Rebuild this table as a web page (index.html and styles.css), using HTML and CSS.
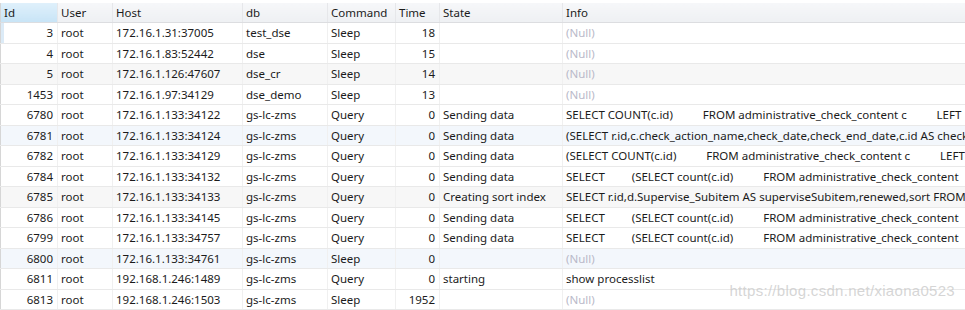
FILE: index.html
```html
<!DOCTYPE html>
<html lang="zh-cn">
<head>
    <meta charset="UTF-8">
    <title>processlist</title>
    <link rel="stylesheet" href="styles.css">
</head>
<body>
    <div class="grid-wrap">
        <table class="grid">
            <colgroup>
                <col class="c-id"><col class="c-user"><col class="c-host"><col class="c-db">
                <col class="c-cmd"><col class="c-time"><col class="c-state"><col class="c-info">
            </colgroup>
            <thead>
                <tr>
                    <th class="sorted">Id</th><th>User</th><th>Host</th><th>db</th>
                    <th>Command</th><th>Time</th><th>State</th><th>Info</th>
                </tr>
            </thead>
            <tbody>
                <tr class="first"><td class="num">3</td><td>root</td><td>172.16.1.31:37005</td><td>test_dse</td><td>Sleep</td><td class="num">18</td><td></td><td class="null">(Null)</td></tr>
                <tr><td class="num">4</td><td>root</td><td>172.16.1.83:52442</td><td>dse</td><td>Sleep</td><td class="num">15</td><td></td><td class="null">(Null)</td></tr>
                <tr class="alt"><td class="num">5</td><td>root</td><td>172.16.1.126:47607</td><td>dse_cr</td><td>Sleep</td><td class="num">14</td><td></td><td class="null">(Null)</td></tr>
                <tr><td class="num">1453</td><td>root</td><td>172.16.1.97:34129</td><td>dse_demo</td><td>Sleep</td><td class="num">13</td><td></td><td class="null">(Null)</td></tr>
                <tr><td class="num">6780</td><td>root</td><td>172.16.1.133:34122</td><td>gs-lc-zms</td><td>Query</td><td class="num">0</td><td>Sending data</td><td class="sql">SELECT COUNT(c.id)          FROM administrative_check_content c          LEFT</td></tr>
                <tr class="hl"><td class="num">6781</td><td>root</td><td>172.16.1.133:34124</td><td>gs-lc-zms</td><td>Query</td><td class="num">0</td><td>Sending data</td><td class="sql">(SELECT r.id,c.check_action_name,check_date,check_end_date,c.id AS check</td></tr>
                <tr><td class="num">6782</td><td>root</td><td>172.16.1.133:34129</td><td>gs-lc-zms</td><td>Query</td><td class="num">0</td><td>Sending data</td><td class="sql">(SELECT COUNT(c.id)          FROM administrative_check_content c          LEFT</td></tr>
                <tr><td class="num">6784</td><td>root</td><td>172.16.1.133:34132</td><td>gs-lc-zms</td><td>Query</td><td class="num">0</td><td>Sending data</td><td class="sql">SELECT         (SELECT count(c.id)          FROM administrative_check_content</td></tr>
                <tr class="alt"><td class="num">6785</td><td>root</td><td>172.16.1.133:34133</td><td>gs-lc-zms</td><td>Query</td><td class="num">0</td><td>Creating sort index</td><td class="sql">SELECT r.id,d.Supervise_Subitem AS superviseSubitem,renewed,sort FROM</td></tr>
                <tr><td class="num">6786</td><td>root</td><td>172.16.1.133:34145</td><td>gs-lc-zms</td><td>Query</td><td class="num">0</td><td>Sending data</td><td class="sql">SELECT         (SELECT count(c.id)          FROM administrative_check_content</td></tr>
                <tr><td class="num">6799</td><td>root</td><td>172.16.1.133:34757</td><td>gs-lc-zms</td><td>Query</td><td class="num">0</td><td>Sending data</td><td class="sql">SELECT         (SELECT count(c.id)          FROM administrative_check_content</td></tr>
                <tr class="hl"><td class="num">6800</td><td>root</td><td>172.16.1.133:34761</td><td>gs-lc-zms</td><td>Sleep</td><td class="num">0</td><td></td><td class="null">(Null)</td></tr>
                <tr><td class="num">6811</td><td>root</td><td>192.168.1.246:1489</td><td>gs-lc-zms</td><td>Query</td><td class="num">0</td><td>starting</td><td>show processlist</td></tr>
                <tr><td class="num">6813</td><td>root</td><td>192.168.1.246:1503</td><td>gs-lc-zms</td><td>Sleep</td><td class="num">1952</td><td></td><td class="null">(Null)</td></tr>
            </tbody>
        </table>
        <div class="watermark">https://blog.csdn.net/xiaona0523</div>
    </div>
</body>
</html>
```

FILE: styles.css
```css
body {
    margin: 0;
    padding: 0;
    background-color: #fff;
    font-family: 'Noto Sans', 'Noto Sans CJK SC', sans-serif;
    font-size: 11.5px;
    color: #1b1b1b;
    overflow: hidden;
}
.grid-wrap {
    position: relative;
    padding-top: 3px;
    width: 965px;
    height: 307px;
    overflow: hidden;
}
.grid {
    border-collapse: collapse;
    table-layout: fixed;
    width: 965px;
    border-left: 1px solid #d6d6d6;
}
.c-id { width: 57px; }
.c-user { width: 55px; }
.c-host { width: 130px; }
.c-db { width: 85px; }
.c-cmd { width: 68px; }
.c-time { width: 44px; }
.c-state { width: 123px; }
.c-info { width: 403px; }
.grid th {
    height: 19px;
    padding: 0 3px;
    text-align: left;
    font-weight: normal;
    background: linear-gradient(#f6f7f9, #eef0f3);
    border-bottom: 1px solid #dcdde0;
    border-right: 1px solid #e6e7ea;
    white-space: nowrap;
}
.grid th.sorted {
    background: linear-gradient(#dff0fb, #c8e4f6);
}
.grid td {
    height: 20.5px;
    box-sizing: border-box;
    padding: 0 3px;
    border-bottom: 1px solid #e9e9e9;
    border-right: 1px solid #f0f0f0;
    white-space: pre;
    overflow: hidden;
}
.grid td.num {
    text-align: right;
    padding-right: 4px;
}
.grid td.null {
    color: #b9b9c9;
}
.grid td.sql {
    padding-right: 0;
    text-overflow: clip;
}
.grid tr.alt td {
    background-color: #f7f7f7;
}
.grid tr.hl td {
    background-color: #f3f7fc;
}
.grid tr.first td:first-child {
    box-shadow: inset 3px 0 0 #dcebf7;
}
.watermark {
    position: absolute;
    right: 10px;
    bottom: 11px;
    font-family: 'Liberation Sans', sans-serif;
    font-size: 15px;
    color: rgba(200, 200, 200, 0.75);
    letter-spacing: 0.3px;
}
```
